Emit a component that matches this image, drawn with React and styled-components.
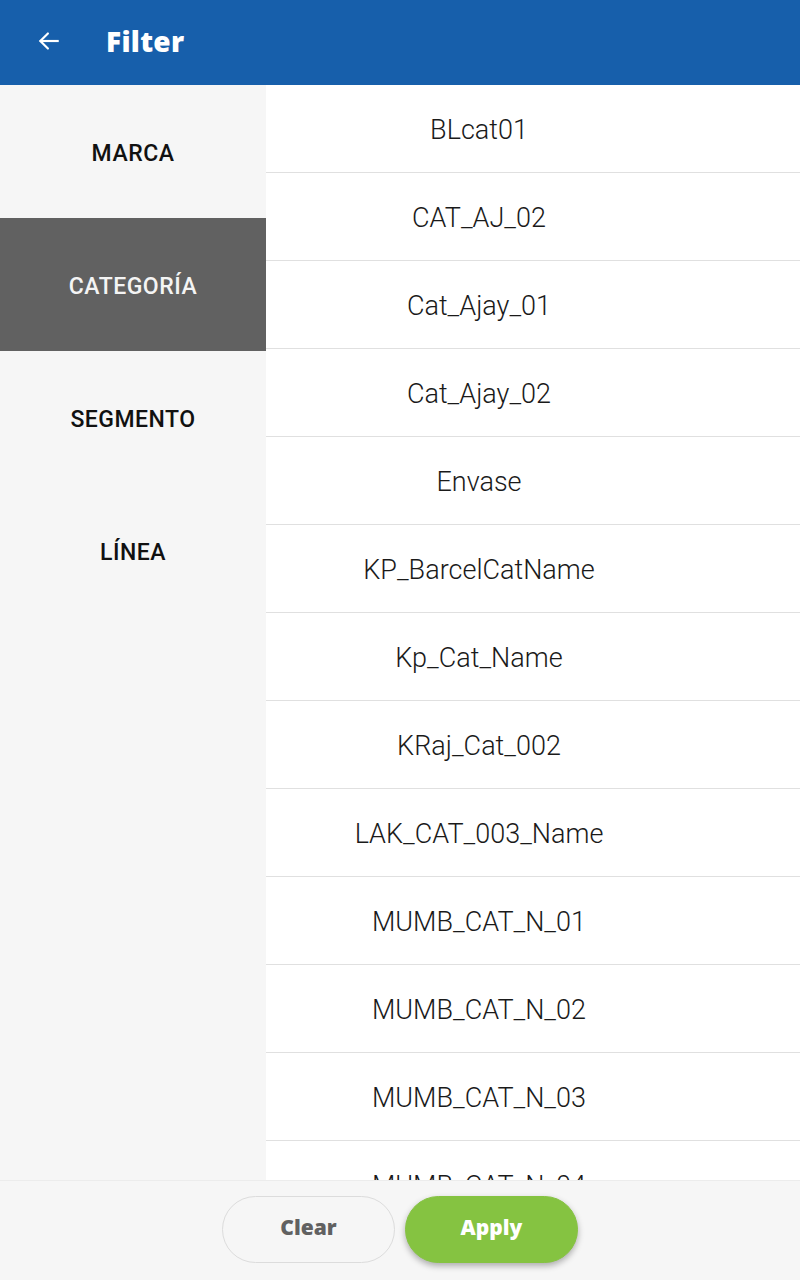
import React from "react";
import styled, { createGlobalStyle } from "styled-components";

const Global = createGlobalStyle`
  html, body { margin: 0; padding: 0; }
  body { font-family: Roboto, "Liberation Sans", sans-serif; background: #fff; }
  * { box-sizing: border-box; }
`;

const Page = styled.div`
  width: 800px;
  height: 1280px;
  display: flex;
  flex-direction: column;
  overflow: hidden;
`;

const Header = styled.header`
  height: 85px;
  flex: none;
  background: #175fab;
  display: flex;
  align-items: center;
  padding-left: 36px;
  padding-bottom: 4px;
  gap: 44px;
`;

const BackButton = styled.button`
  border: none;
  background: none;
  padding: 0;
  width: 26px;
  height: 26px;
  display: flex;
  align-items: center;
  justify-content: center;
  color: #fff;
`;

const Title = styled.h1`
  margin: 0;
  color: #fff;
  font-family: "Open Sans", sans-serif;
  font-weight: 800;
  font-size: 28px;
  letter-spacing: 0.3px;
`;

const Body = styled.div`
  flex: 1;
  display: flex;
  min-height: 0;
`;

const Sidebar = styled.nav`
  width: 266px;
  flex: none;
  background: #f6f6f6;
  display: flex;
  flex-direction: column;
`;

const Tab = styled.div`
  height: 133px;
  display: flex;
  align-items: center;
  justify-content: center;
  padding-top: 3px;
  font-family: Roboto, sans-serif;
  font-weight: 500;
  font-size: 23px;
  letter-spacing: 0.5px;
  color: ${(p) => (p.$active ? "#f4f4f4" : "#111")};
  background: ${(p) => (p.$active ? "#616161" : "transparent")};
`;

const List = styled.div`
  flex: 1;
  overflow: hidden;
  background: #fff;
`;

const Row = styled.div`
  height: 88px;
  border-bottom: 1px solid #e0e0e0;
  display: flex;
  align-items: center;
  justify-content: center;
  padding-right: 108px;
  padding-top: 3px;
  font-family: Roboto, sans-serif;
  font-weight: 300;
  font-size: 27px;
  color: #1a1a1a;
`;

const Footer = styled.footer`
  height: 100px;
  flex: none;
  background: #f6f6f6;
  border-top: 1px solid #ececec;
  display: flex;
  justify-content: center;
  align-items: center;
  gap: 10px;
  padding-bottom: 2px;
`;

const Pill = styled.button`
  width: 173px;
  height: 67px;
  border-radius: 34px;
  padding: 0 0 5px;
  font-family: "Open Sans", sans-serif;
  font-weight: 800;
  font-size: 21px;
  cursor: pointer;
  border: 1px solid ${(p) => (p.$primary ? "#85c341" : "#dcdcdc")};
  background: ${(p) => (p.$primary ? "#85c341" : "transparent")};
  color: ${(p) => (p.$primary ? "#fff" : "#616161")};
  box-shadow: ${(p) => (p.$primary ? "0 3px 6px rgba(0,0,0,0.3)" : "none")};
`;

const tabs = ["MARCA", "CATEGORÍA", "SEGMENTO", "LÍNEA"];
const items = [
  "BLcat01",
  "CAT_AJ_02",
  "Cat_Ajay_01",
  "Cat_Ajay_02",
  "Envase",
  "KP_BarcelCatName",
  "Kp_Cat_Name",
  "KRaj_Cat_002",
  "LAK_CAT_003_Name",
  "MUMB_CAT_N_01",
  "MUMB_CAT_N_02",
  "MUMB_CAT_N_03",
  "MUMB_CAT_N_04",
];

export default function App() {
  return (
    <Page>
      <Global />
      <Header>
        <BackButton aria-label="back">
          <svg width="26" height="26" viewBox="0 0 24 24" fill="none" stroke="#fff" strokeWidth="2" strokeLinecap="square">
            <path d="M20 12H4.5" />
            <path d="M11 5l-7 7 7 7" strokeLinecap="round" strokeLinejoin="miter" />
          </svg>
        </BackButton>
        <Title>Filter</Title>
      </Header>
      <Body>
        <Sidebar>
          {tabs.map((t) => (
            <Tab key={t} $active={t === "CATEGORÍA"}>{t}</Tab>
          ))}
        </Sidebar>
        <List>
          {items.map((i) => (
            <Row key={i}>{i}</Row>
          ))}
        </List>
      </Body>
      <Footer>
        <Pill>Clear</Pill>
        <Pill $primary>Apply</Pill>
      </Footer>
    </Page>
  );
}
